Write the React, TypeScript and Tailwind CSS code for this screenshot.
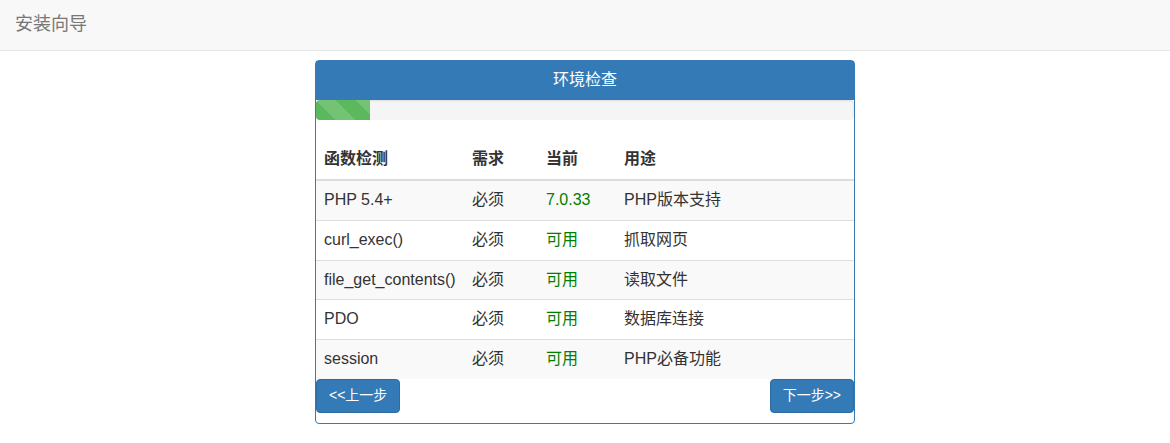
const rows = [
  { name: 'PHP 5.4+', need: '必须', cur: '7.0.33', use: 'PHP版本支持' },
  { name: 'curl_exec()', need: '必须', cur: '可用', use: '抓取网页' },
  { name: 'file_get_contents()', need: '必须', cur: '可用', use: '读取文件' },
  { name: 'PDO', need: '必须', cur: '可用', use: '数据库连接' },
  { name: 'session', need: '必须', cur: '可用', use: 'PHP必备功能' },
]

export default function App() {
  return (
    <div className="min-h-[443px] bg-white text-[16px] leading-[1.42857] text-[#333] font-['Liberation_Sans','Noto_Sans_CJK_SC',sans-serif]">
      <nav className="h-[51px] bg-[#f8f8f8] border-b border-[#e7e7e7] flex items-center px-[15px]">
        <span className="text-[18px] text-[#777]">安装向导</span>
      </nav>

      <div className="flex justify-center pt-[9px]">
        <div className="w-[540px] border border-[#337ab7] rounded-[4px] pb-[10px]">
          <div className="h-[39px] bg-[#337ab7] text-white flex items-center justify-center text-[16px]">
            环境检查
          </div>

          <div className="h-[20px] bg-[#f5f5f5] rounded-[4px] overflow-hidden shadow-[inset_0_1px_2px_rgba(0,0,0,0.1)]">
            <div className="h-full w-[10%] bg-[#5cb85c] bg-[linear-gradient(45deg,rgba(255,255,255,0.15)_25%,transparent_25%,transparent_50%,rgba(255,255,255,0.15)_50%,rgba(255,255,255,0.15)_75%,transparent_75%,transparent)] bg-[length:40px_40px]" />
          </div>

          <table className="w-full mt-[20px] border-collapse">
            <thead>
              <tr className="border-b-2 border-[#ddd] text-left">
                <th className="w-[148px] p-[8px] font-bold">函数检测</th>
                <th className="w-[74px] p-[8px] font-bold">需求</th>
                <th className="w-[78px] p-[8px] font-bold">当前</th>
                <th className="p-[8px] font-bold">用途</th>
              </tr>
            </thead>
            <tbody>
              {rows.map((r, i) => (
                <tr key={r.name} className={`border-t border-[#ddd] ${i % 2 === 0 ? 'bg-[#f9f9f9]' : 'bg-white'}`}>
                  <td className="p-[8px] whitespace-nowrap">{r.name}</td>
                  <td className="p-[8px]">{r.need}</td>
                  <td className="p-[8px] text-[#008000]">{r.cur}</td>
                  <td className="p-[8px]">{r.use}</td>
                </tr>
              ))}
            </tbody>
          </table>

          <div className="flex justify-between">
            <button className="h-[34px] px-[12px] text-[14px] text-white bg-[#337ab7] border border-[#2e6da4] rounded-[4px]">
              &lt;&lt;上一步
            </button>
            <button className="h-[34px] px-[12px] text-[14px] text-white bg-[#337ab7] border border-[#2e6da4] rounded-[4px]">
              下一步&gt;&gt;
            </button>
          </div>
        </div>
      </div>
    </div>
  )
}
